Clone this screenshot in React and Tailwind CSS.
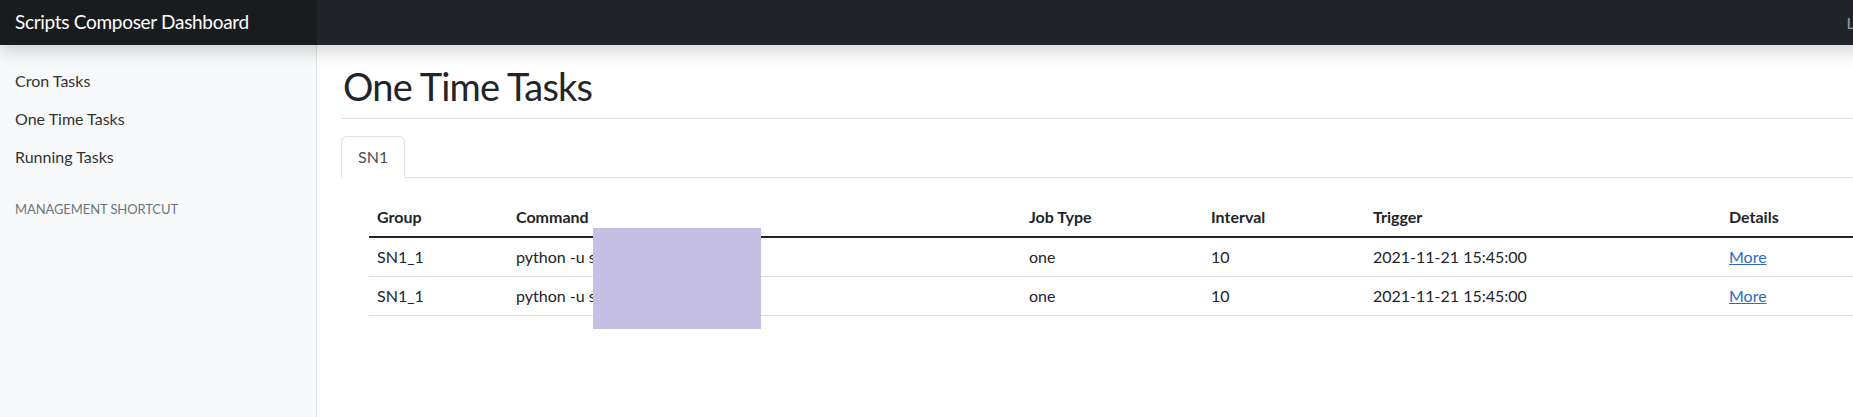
import React from "react";

const rows = [
  { group: "SN1_1", command: "python -u s", jobType: "one", interval: "10", trigger: "2021-11-21 15:45:00" },
  { group: "SN1_1", command: "python -u s", jobType: "one", interval: "10", trigger: "2021-11-21 15:45:00" },
];

const navItems = ["Cron Tasks", "One Time Tasks", "Running Tasks"];

const App = () => {
  return (
    <div className="relative w-full h-[417px] overflow-hidden bg-white text-[#212529] font-['Lato','Noto_Sans',sans-serif]">
      <div className="w-[1911px]">
        {/* top bar */}
        <header className="relative z-10 flex h-[45px] bg-[#212529] shadow-[0_8px_16px_rgba(0,0,0,0.15)]">
          <div className="flex w-[317px] items-center bg-[#191c1f] px-[15px] text-[19px] tracking-[-0.3px] text-white">
            Scripts Composer Dashboard
          </div>
          <div className="ml-auto flex items-center px-4 text-[16px] text-white/55">Logout</div>
        </header>

        <div className="flex">
          {/* sidebar */}
          <aside className="h-[372px] w-[317px] shrink-0 border-r border-[#dfe0e1] bg-[#f8f9fa] pt-[17px]">
            <ul>
              {navItems.map((item) => (
                <li key={item}>
                  <a href="#" className="block px-[15px] py-[7px] text-[16px] leading-6 text-[#333]">
                    {item}
                  </a>
                </li>
              ))}
            </ul>
            <h6 className="mt-[24px] px-[15px] text-[13px] uppercase tracking-[-0.1px] text-[#6c757d]">Management Shortcut</h6>
          </aside>

          {/* main */}
          <main className="flex-1 px-6 pt-[17px]">
            <div className="border-b border-[#dee2e6] pb-2">
              <h1 className="pl-[2px] text-[38px] leading-[48px] tracking-[-0.8px] font-normal">One Time Tasks</h1>
            </div>

            <div className="mt-[17px] flex border-b border-[#dee2e6]">
              <button className="-mb-px rounded-t-[6px] border border-[#dee2e6] border-b-white bg-white px-4 py-2 text-[16px] leading-6 text-[#495057]">
                SN1
              </button>
            </div>

            <table className="ml-[28px] mt-[20px] w-[1518px] table-fixed text-left text-[16px]">
              <colgroup>
                <col className="w-[139px]" />
                <col className="w-[513px]" />
                <col className="w-[182px]" />
                <col className="w-[162px]" />
                <col className="w-[356px]" />
                <col />
              </colgroup>
              <thead className="border-b-2 border-[#212529]">
                <tr>
                  {["Group", "Command", "Job Type", "Interval", "Trigger", "Details"].map((h) => (
                    <th key={h} className="px-2 py-[7px] font-bold leading-6">
                      {h}
                    </th>
                  ))}
                </tr>
              </thead>
              <tbody>
                {rows.map((r, i) => (
                  <tr key={i} className="border-b border-[#dee2e6]">
                    <td className="px-2 py-[7px] leading-6">{r.group}</td>
                    <td className="px-2 py-[7px] leading-6">{r.command}</td>
                    <td className="px-2 py-[7px] leading-6">{r.jobType}</td>
                    <td className="px-2 py-[7px] leading-6">{r.interval}</td>
                    <td className="px-2 py-[7px] leading-6">{r.trigger}</td>
                    <td className="px-2 py-[7px] leading-6">
                      <a href="#" className="text-[#2c6cc4] underline">
                        More
                      </a>
                    </td>
                  </tr>
                ))}
              </tbody>
            </table>
          </main>
        </div>
      </div>

      {/* redaction block laid over the command column */}
      <div className="absolute left-[593px] top-[228px] h-[101px] w-[168px] bg-[#c6bfe4]" />
    </div>
  );
};

export default App;
